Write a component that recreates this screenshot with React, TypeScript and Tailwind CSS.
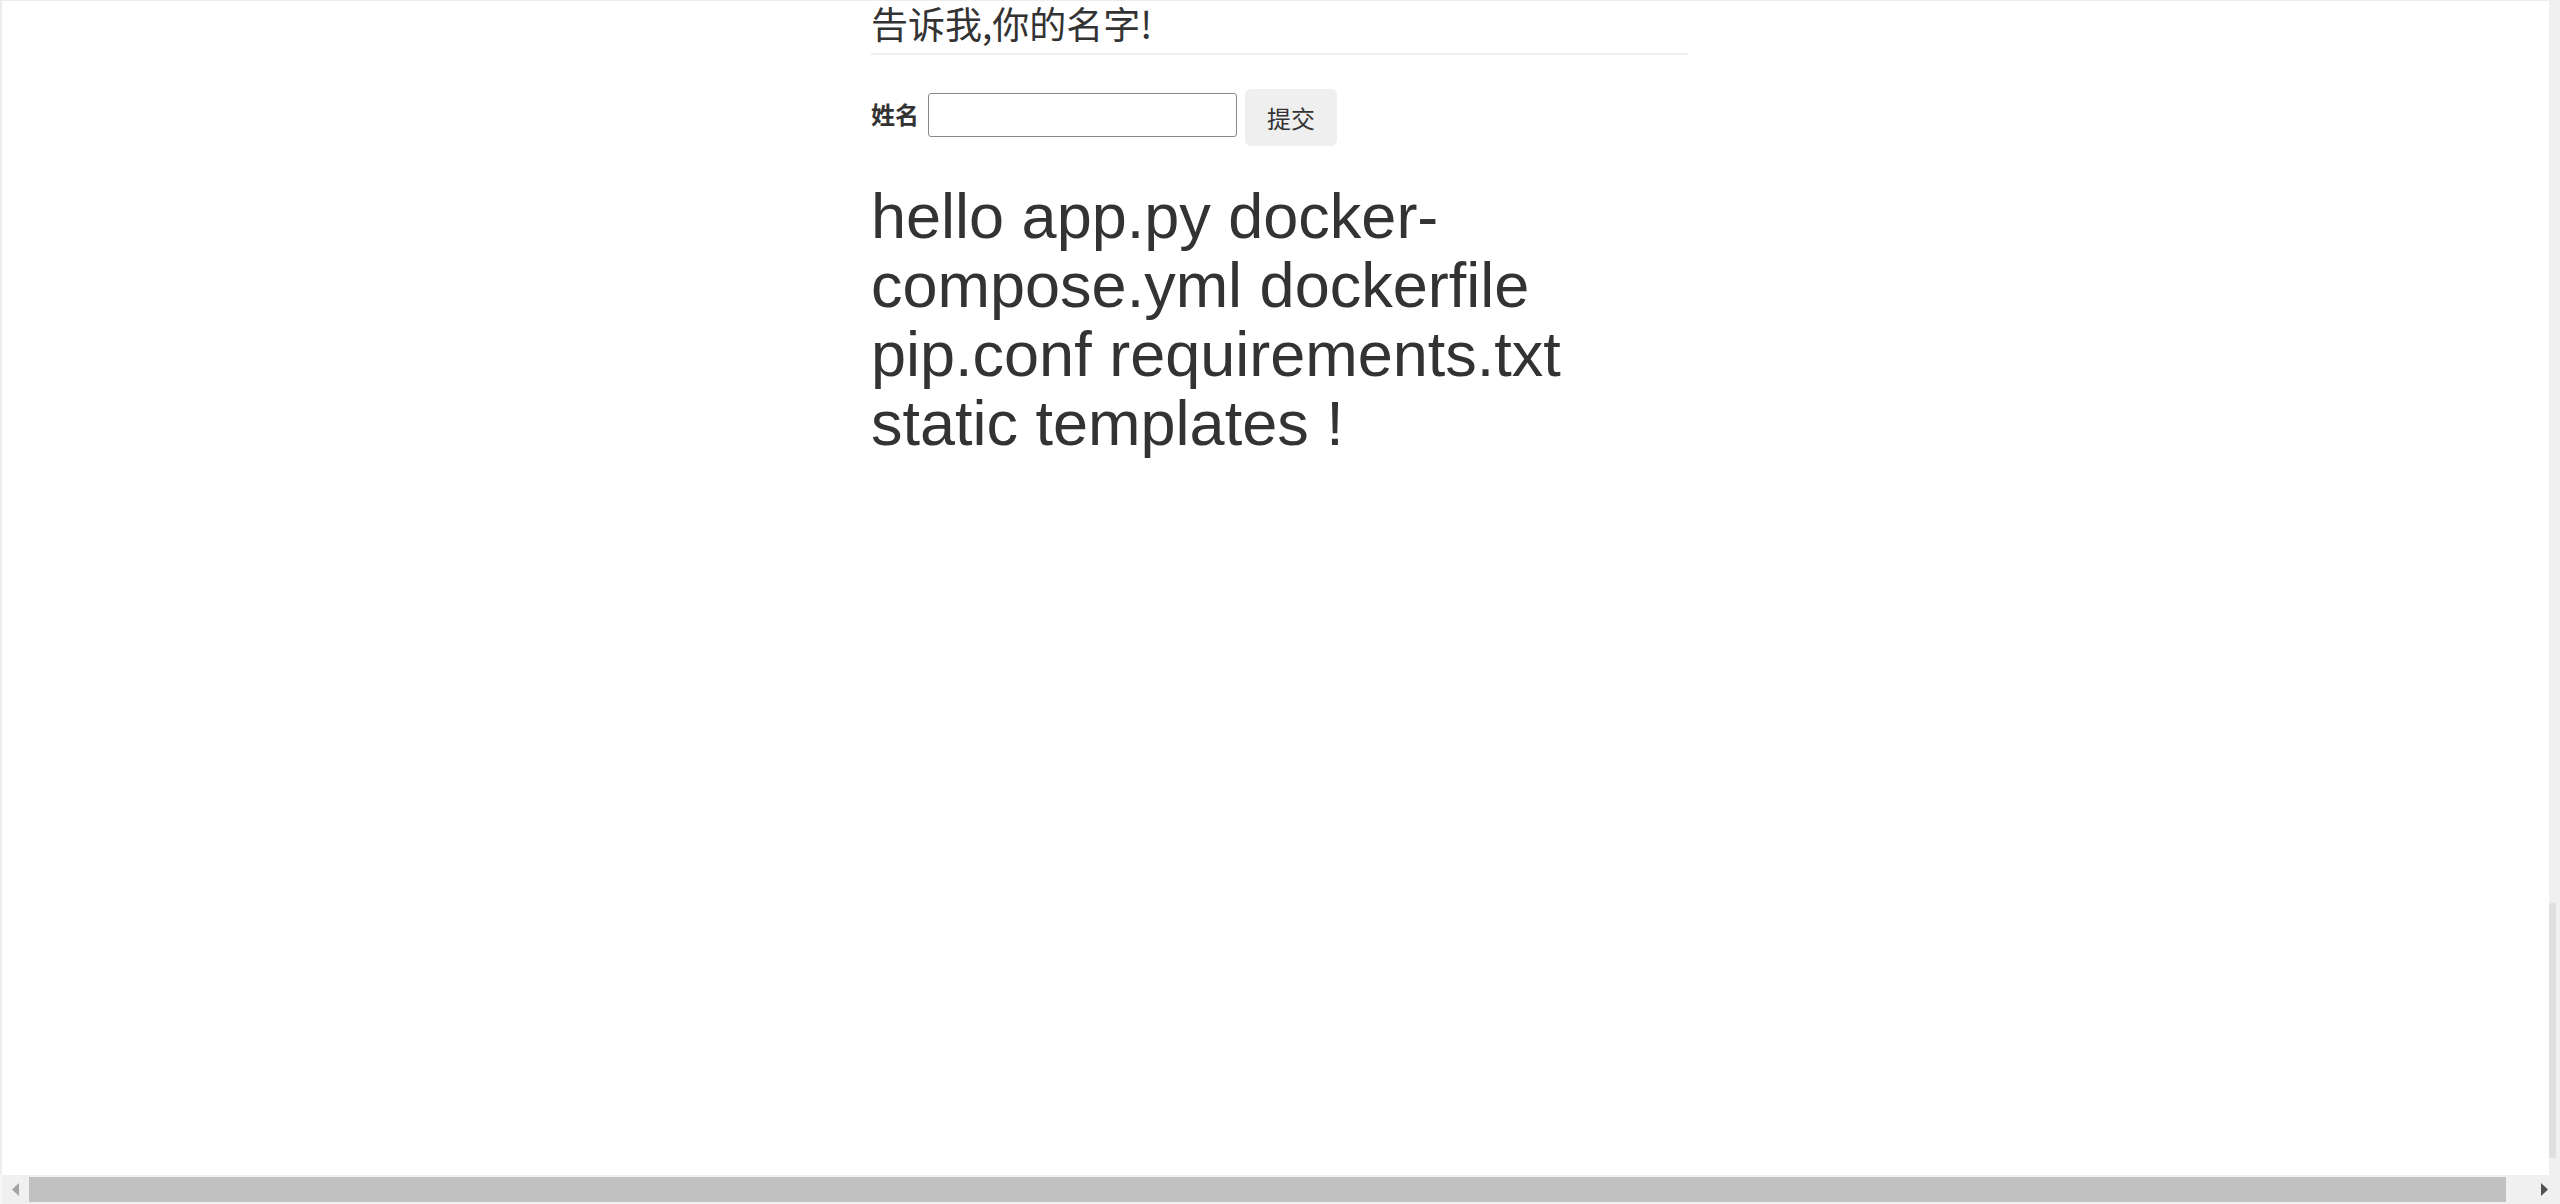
import React from "react";

export default function App() {
  return (
    <div className="w-[2560px] h-[1204px] flex bg-white overflow-hidden text-[#333] font-['Liberation_Sans',sans-serif]">
      <div className="flex-1 flex flex-col">
        <div className="flex-1 border-l-2 border-t border-[#ededed] pl-[869px]">
          <div className="w-[817px]">
            <div className="text-[37px] leading-[44px] font-['Noto_Sans_CJK_SC',sans-serif] text-[#333]">
              告诉我,你的名字!
            </div>
            <div className="mt-[8px] h-[2px] bg-[#eeeeee]" />
            <form className="mt-[34px] flex items-start" onSubmit={(e) => e.preventDefault()}>
              <label className="mt-[13px] text-[24px] leading-[24px] font-bold font-['Noto_Sans_CJK_SC',sans-serif] text-[#333]">
                姓名
              </label>
              <input
                type="text"
                className="ml-[9px] mt-[4px] w-[309px] h-[44px] border border-[#8a8a8a] rounded-[3px] bg-white outline-none"
              />
              <button
                type="submit"
                className="ml-[8px] w-[92px] h-[57px] bg-[#efefef] rounded-[6px] text-[24px] leading-[30px] text-[#333] font-['Noto_Sans_CJK_SC',sans-serif]"
              >
                提交
              </button>
            </form>
            <div className="mt-[36px] w-[760px] text-[63px] leading-[69px] text-[#333] font-['Liberation_Sans',sans-serif]">
              hello app.py docker-compose.yml dockerfile pip.conf requirements.txt static templates !
            </div>
          </div>
        </div>
        <div className="h-[29px] flex items-center bg-[#f0f0f0] border-l-2 border-[#f7f7f7]">
          <div className="w-[27px] h-full flex items-center justify-center">
            <svg width="7" height="13" viewBox="0 0 7 13">
              <polygon points="7,0 0,6.5 7,13" fill="#a3a3a3" />
            </svg>
          </div>
          <div className="w-[2477px] h-[25px] bg-[#c1c1c1]" />
          <div className="flex-1 h-full flex items-center justify-end pr-[1px]">
            <svg width="7" height="13" viewBox="0 0 7 13">
              <polygon points="0,0 7,6.5 0,13" fill="#505050" />
            </svg>
          </div>
        </div>
      </div>
      <div className="w-[11px] flex flex-col bg-[#f0f0f0]">
        <div className="h-[903px]" />
        <div className="w-[7px] h-[255px] bg-[#dfdfdf] rounded-t-[3px]" />
        <div className="flex-1" />
      </div>
    </div>
  );
}
